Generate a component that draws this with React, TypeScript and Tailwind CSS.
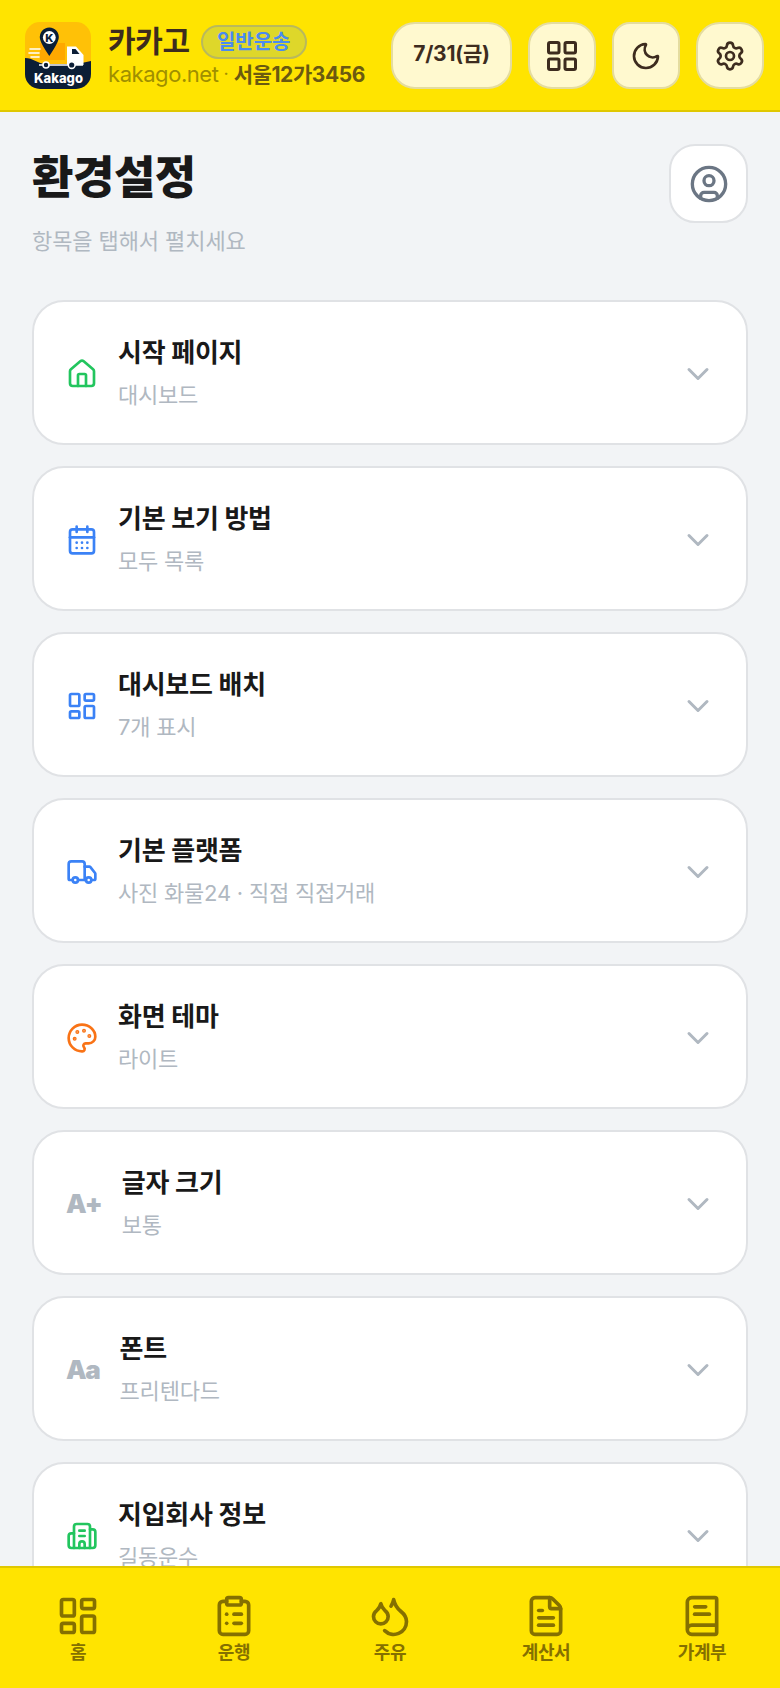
import React from "react";
import {
  House,
  CalendarDays,
  LayoutDashboard,
  Truck,
  Palette,
  Building2,
  ChevronDown,
  LayoutGrid,
  Moon,
  Settings,
  CircleUser,
  ClipboardList,
  Droplets,
  FileText,
  BookText,
} from "lucide-react";

function Logo() {
  return (
    <svg width="66" height="67" viewBox="0 0 66 67" className="shrink-0">
      <defs>
        <clipPath id="logoClip">
          <rect width="66" height="67" rx="15" />
        </clipPath>
      </defs>
      <g clipPath="url(#logoClip)">
        <rect width="66" height="67" fill="#FFC107" />
        <path d="M0 36 C8 36 12 41 20 42 H52 L66 39 V67 H0 Z" fill="#0B1E36" />
        <path d="M15 21 H40 V38 H15 Z" fill="#FFA800" />
        <path d="M42 24.5 H51 L58.5 33 V43 H42 Z" fill="#fff" />
        <path d="M47 27 H50.5 L54.5 32 H47 Z" fill="#0B1E36" />
        <path d="M14 43 H58" stroke="#fff" strokeWidth="1.6" />
        <circle cx="21" cy="43" r="3" fill="#0B1E36" stroke="#fff" strokeWidth="1.6" />
        <circle cx="46.7" cy="43" r="3.4" fill="#0B1E36" stroke="#fff" strokeWidth="1.6" />
        <path d="M5 27 H15 M4 31 H14 M6 35 H14" stroke="#fff" strokeWidth="1.6" strokeLinecap="round" />
        <path d="M15 17 A9.5 9.5 0 1 1 33.6 17 Q32.5 22 24.3 34 Q16 22 15 17 Z" fill="#0B1E36" />
        <circle cx="24.3" cy="15.5" r="6.4" fill="#fff" />
        <text x="24.3" y="19.5" textAnchor="middle" fontSize="11" fontWeight="800" fill="#0B1E36" fontFamily="Inter, sans-serif">K</text>
        <text x="33.5" y="60.5" textAnchor="middle" fontSize="13" fontWeight="800" fill="#fff" fontFamily="Inter, sans-serif">Kakago</text>
      </g>
    </svg>
  );
}

function HeaderButton({ children, rounded = "rounded-[24px]" }: { children: React.ReactNode; rounded?: string }) {
  return (
    <div className={`w-[68px] h-[67px] flex items-center justify-center bg-[#FFF9CF] border-2 border-[#E4DCA0] ${rounded} text-[#3D2C1E]`}>
      {children}
    </div>
  );
}

type Row = { title: string; sub: string; icon: React.ReactNode };

const rows: Row[] = [
  { title: "시작 페이지", sub: "대시보드", icon: <House size={32} strokeWidth={2} className="text-[#22C55E]" /> },
  { title: "기본 보기 방법", sub: "모두 목록", icon: <CalendarDays size={32} strokeWidth={2} className="text-[#3B82F6]" /> },
  { title: "대시보드 배치", sub: "7개 표시", icon: <LayoutDashboard size={32} strokeWidth={2} className="text-[#3B82F6]" /> },
  { title: "기본 플랫폼", sub: "사진 화물24 · 직접 직접거래", icon: <Truck size={32} strokeWidth={2} className="text-[#3B82F6]" /> },
  { title: "화면 테마", sub: "라이트", icon: <Palette size={32} strokeWidth={2} className="text-[#F97316]" /> },
  { title: "글자 크기", sub: "보통", icon: <span className="text-[26px] font-black text-[#B0B8C1] tracking-[-0.04em]">A+</span> },
  { title: "폰트", sub: "프리텐다드", icon: <span className="text-[26px] font-black text-[#B0B8C1] tracking-[-0.05em]">Aa</span> },
  { title: "지입회사 정보", sub: "길동운수", icon: <Building2 size={32} strokeWidth={2} className="text-[#22C55E]" /> },
];

const navs = [
  { label: "홈", Icon: LayoutDashboard },
  { label: "운행", Icon: ClipboardList },
  { label: "주유", Icon: Droplets },
  { label: "계산서", Icon: FileText },
  { label: "가계부", Icon: BookText },
];

export default function App() {
  return (
    <div className="w-[780px] h-[1688px] flex flex-col overflow-hidden bg-[#F2F4F6] [font-family:Inter,'Noto_Sans_CJK_KR',sans-serif]">
      <header className="h-[112px] shrink-0 bg-[#FFE400] border-b-2 border-[#E0C800] flex items-start justify-between pl-[25px] pr-4 pt-[22px]">
        <div className="flex gap-[17px]">
          <Logo />
          <div className="flex flex-col">
            <div className="flex items-center gap-[11px] h-[38px]">
              <span className="text-[30px] font-bold leading-none text-[#3D2C1E] tracking-[-0.01em]">카카고</span>
              <span className="h-[34px] mt-[2px] px-[14px] flex items-center rounded-full bg-[#DED72A] border-2 border-[#B9B95C] text-[20px] font-bold text-[#4A8BF0]">일반운송</span>
            </div>
            <div className="flex items-center h-[30px] -mt-[1px] leading-none">
              <span className="text-[22px] font-normal text-[#A08F00] tracking-[-0.02em]">kakago.net</span>
              <span className="mx-[5px] text-[#A08F00] text-[18px]">·</span>
              <span className="text-[21px] font-bold text-[#6B5A10] tracking-[-0.02em]">서울12가3456</span>
            </div>
          </div>
        </div>
        <div className="flex gap-4">
          <div className="w-[121px] h-[67px] flex items-start pt-[14px] justify-center bg-[#FFF9CF] border-2 border-[#E4DCA0] rounded-[24px] text-[21px] font-bold text-[#3D2C1E] tracking-[-0.01em]">7/31(금)</div>
          <HeaderButton><LayoutGrid size={36} strokeWidth={2} /></HeaderButton>
          <HeaderButton rounded="rounded-[18px]"><Moon size={32} strokeWidth={2} /></HeaderButton>
          <HeaderButton><Settings size={32} strokeWidth={2} /></HeaderButton>
        </div>
      </header>

      <main className="flex-1 min-h-0 overflow-hidden px-8 pt-8">
        <div className="flex items-start justify-between h-[156px]">
          <div className="flex flex-col pt-[4px]">
            <h1 className="text-[45px] leading-[60px] font-extrabold text-[#191919] tracking-[-0.01em]">환경설정</h1>
            <p className="mt-[18px] text-[22px] leading-[30px] text-[#B0B8C1] tracking-[-0.004em]">항목을 탭해서 펼치세요</p>
          </div>
          <div className="w-[79px] h-[79px] flex items-center justify-center bg-white border-2 border-[#E0E2E5] rounded-[26px] text-[#6B7684]">
            <CircleUser size={40} strokeWidth={2} />
          </div>
        </div>
        <div className="flex flex-col gap-[21px]">
          {rows.map((r) => (
            <div key={r.title} className="h-[145px] shrink-0 flex items-center bg-white border-2 border-[#E0E2E5] rounded-[32px] pl-8 pr-[30px]">
              <div className="flex items-center gap-5 flex-1 min-w-0">
                <div className="shrink-0 flex items-center justify-center mt-[2px]">{r.icon}</div>
                <div className="flex flex-col">
                  <div className="text-[26px] leading-[36px] font-bold text-[#191919] tracking-[-0.01em] -mt-[1px]">{r.title}</div>
                  <div className="mt-[9px] text-[22px] leading-[30px] text-[#B0B8C1] tracking-[-0.01em]">{r.sub}</div>
                </div>
              </div>
              <ChevronDown size={36} strokeWidth={2} className="text-[#B0B8C1] shrink-0 mt-[2px]" />
            </div>
          ))}
        </div>
      </main>

      <nav className="h-[122px] shrink-0 bg-[#FFE400] border-t-2 border-[#E0C800] grid grid-cols-5 relative z-10">
        {navs.map(({ label, Icon }) => (
          <div key={label} className="flex flex-col items-center pt-[26px]">
            <Icon size={44} strokeWidth={2} className="text-[#857000]" />
            <span className="mt-[3px] text-[18px] leading-[24px] font-semibold text-[#857000] tracking-[-0.02em]">{label}</span>
          </div>
        ))}
      </nav>
    </div>
  );
}
